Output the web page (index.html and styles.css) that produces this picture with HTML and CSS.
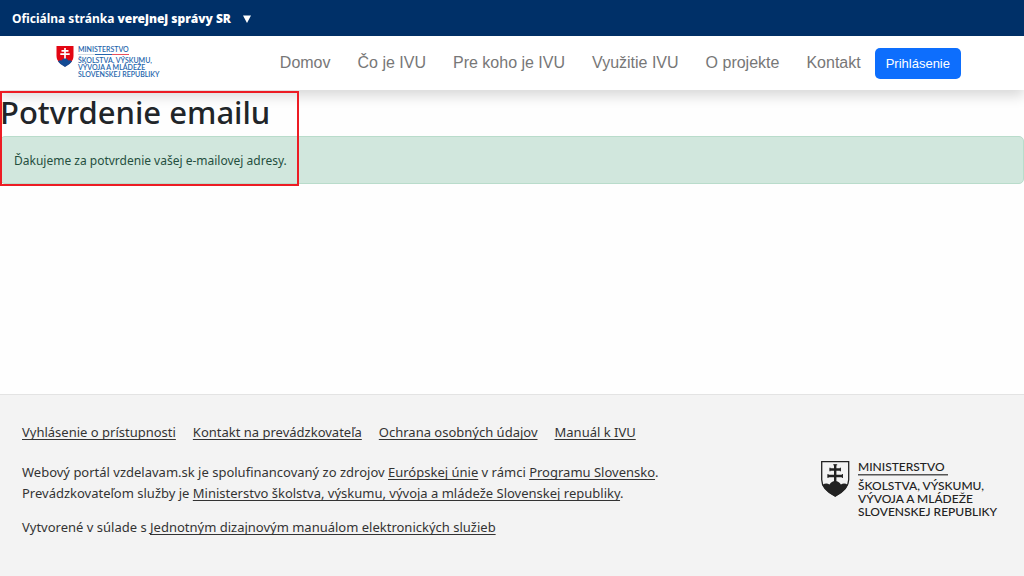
FILE: index.html
```html
<!DOCTYPE html>
<html lang="sk">
<head>
<meta charset="utf-8">
<meta name="viewport" content="width=device-width, initial-scale=1">
<title>Potvrdenie emailu</title>
<link rel="stylesheet" href="styles.css">
</head>
<body>
<div class="gov-bar">
  <button class="gov-toggle" type="button"><span>Oficiálna stránka <b>verejnej správy SR</b></span>
    <svg class="gov-arrow" viewBox="0 0 8 8" aria-hidden="true"><path d="M0 0.5h8L4 8z"/></svg>
  </button>
</div>
<header class="header">
  <a class="brand" href="#" aria-label="Ministerstvo školstva, výskumu, vývoja a mládeže Slovenskej republiky">
    <svg class="brand-logo" viewBox="0 0 106 36">
      <path fill="#e30613" d="M0.500 1h17v10c0 5-4 8-8.500 10.500C4.500 19 .5 16 .5 11z"/>
      <path fill="#134b94" d="M2 16.500q1.500-2 3.500-1 1.500-2.500 3.500-2.500t3.500 2.500q2-1 3.500 1-2 3-7 5.500-5-2.500-7-5.500z"/>
      <path fill="none" stroke="#fff" stroke-width="1.700" d="M9 3v10.500M5.500 5.800h7M4.300 9.200h9.400"/>
      <g class="brand-text">
        <text x="22" y="7">MINISTERSTVO</text>
        <text x="22" y="18">ŠKOLSTVA, VÝSKUMU,</text>
        <text x="22" y="25">VÝVOJA A MLÁDEŽE</text>
        <text x="22" y="32">SLOVENSKEJ REPUBLIKY</text>
      </g>
      <path fill="#d5dbe3" d="M22 9h17v1H22z"/>
      <path fill="#2464ac" d="M39 9h17v1H39z"/>
      <path fill="#e9505c" d="M56 9h17v1H56z"/>
    </svg>
  </a>
  <nav class="nav">
    <a href="#">Domov</a>
    <a href="#">Čo je IVU</a>
    <a href="#">Pre koho je IVU</a>
    <a href="#">Využitie IVU</a>
    <a href="#">O projekte</a>
    <a href="#">Kontakt</a>
  </nav>
  <button class="login" type="button">Prihlásenie</button>
</header>
<main class="main">
  <h1 class="title">Potvrdenie emailu</h1>
  <div class="alert" role="alert">Ďakujeme za potvrdenie vašej e-mailovej adresy.</div>
  <div class="highlight" aria-hidden="true"></div>
</main>
<footer class="footer">
  <div class="footer-text">
    <ul class="footer-links">
      <li><a href="#">Vyhlásenie o prístupnosti</a></li>
      <li><a href="#">Kontakt na prevádzkovateľa</a></li>
      <li><a href="#">Ochrana osobných údajov</a></li>
      <li><a href="#">Manuál k IVU</a></li>
    </ul>
    <p>Webový portál vzdelavam.sk je spolufinancovaný zo zdrojov <a href="#">Európskej únie</a> v rámci <a href="#">Programu Slovensko</a>.<br>Prevádzkovateľom služby je <a href="#">Ministerstvo školstva, výskumu, vývoja a mládeže Slovenskej republiky</a>.</p>
    <p>Vytvorené v súlade s <a href="#">Jednotným dizajnovým manuálom elektronických služieb</a></p>
  </div>
  <svg class="footer-logo" viewBox="0 0 184 60" role="img" aria-label="Ministerstvo školstva, výskumu, vývoja a mládeže Slovenskej republiky">
    <path fill="#f3f3f3" stroke="#222" stroke-width="1.300" d="M1.700 1.700h27v18c0 8-7 13-13.500 16.500C8.500 32.700 1.700 27.700 1.700 19.700z"/>
    <path fill="#222" d="M2.500 25q3.500-2.500 7-.5 2-3.500 5.700-3.500t5.700 3.500q3.500-2 7 .5-3 6.500-12.700 11.500Q5.500 31.500 2.500 25z"/>
    <path fill="none" stroke="#222" stroke-width="2.400" d="M15.200 4.500v18M9.700 9.500h11M7.700 16h15"/>
    <path fill="none" stroke="#222" stroke-width="1" d="M10 7.700v3.600M20.400 7.700v3.600M8 14v4M22.400 14v4M13.200 4.800h4"/>
    <g class="footer-logo-text">
      <text x="38" y="11">MINISTERSTVO</text>
      <text x="38" y="30">ŠKOLSTVA, VÝSKUMU,</text>
      <text x="38" y="43">VÝVOJA A MLÁDEŽE</text>
      <text x="38" y="56">SLOVENSKEJ REPUBLIKY</text>
    </g>
    <path fill="#555" d="M38 14h90v1.500H38z"/>
  </svg>
</footer>
</body>
</html>
```
FILE: styles.css
```css
* { box-sizing: border-box; }

body {
  margin: 0;
  min-height: 100vh;
  display: flex;
  flex-direction: column;
  background: #fefefe;
  color: #212529;
  font: 13px/20px "Noto Sans", sans-serif;
}

.gov-bar {
  padding: 9px 12px 7px;
  background: #003068;
}

.gov-toggle {
  display: flex;
  align-items: center;
  gap: 12px;
  padding: 0;
  border: 0;
  background: none;
  color: #fff;
  font: 700 12px/20px "Noto Sans", sans-serif;
}

.gov-toggle b { font-weight: 900; }

.gov-arrow {
  width: 8px;
  height: 8px;
  fill: #fff;
}

.header {
  position: relative;
  z-index: 1;
  display: flex;
  align-items: center;
  padding: 0 63px 0 56px;
  min-height: 54px;
  background: #fff;
  box-shadow: 0 6px 12px rgba(0, 0, 0, 0.15);
}

.brand { margin-right: auto; }

.brand-logo {
  display: block;
  width: 106px;
  height: 36px;
}

.brand-text {
  fill: #2464ac;
  font: 600 7px Lato, sans-serif;
}

.nav {
  display: flex;
  gap: 27px;
  margin-right: 14px;
}

.nav a {
  color: #777;
  font: 16px/24px "Liberation Sans", Arial, sans-serif;
  text-decoration: none;
}

.login {
  padding: 5px 11px;
  border: 0;
  border-radius: 5px;
  background: #0d6efd;
  color: #fff;
  font: 13px/21px "Liberation Sans", Arial, sans-serif;
}

.main {
  position: relative;
  flex: 1;
}

.title {
  margin: 0 0 2px;
  font-size: 31px;
  font-weight: 500;
  line-height: 44px;
}

.alert {
  padding: 14px 13px 12px;
  border: 1px solid #b9dccb;
  border-radius: 5px;
  background: #d1e7dd;
  color: #254f3e;
  font-size: 12px;
}

/* Marker frame over the confirmation message */
.highlight {
  position: absolute;
  z-index: 2;
  top: 1px;
  left: 0;
  width: 299px;
  height: 95px;
  border: 2px solid #ed1c24;
}

.footer {
  display: flex;
  align-items: center;
  justify-content: space-between;
  padding: 27px 20px 38px 22px;
  border-top: 1px solid #e3e3e3;
  background: #f3f3f3;
  color: #333;
  line-height: 21px;
}

.footer-links {
  display: flex;
  gap: 17px;
  margin: 0 0 19px;
  padding: 0;
  list-style: none;
}

.footer p { margin: 0 0 13px; }
.footer p:last-child { margin-bottom: 0; }

.footer a {
  color: inherit;
  text-decoration: underline 1px;
  text-decoration-skip-ink: none;
  text-underline-offset: 2px;
}

.footer-logo {
  flex: none;
  width: 184px;
  height: 60px;
  margin-top: 20px;
}

.footer-logo-text {
  fill: #222;
  font: 500 12px Lato, sans-serif;
}
```
